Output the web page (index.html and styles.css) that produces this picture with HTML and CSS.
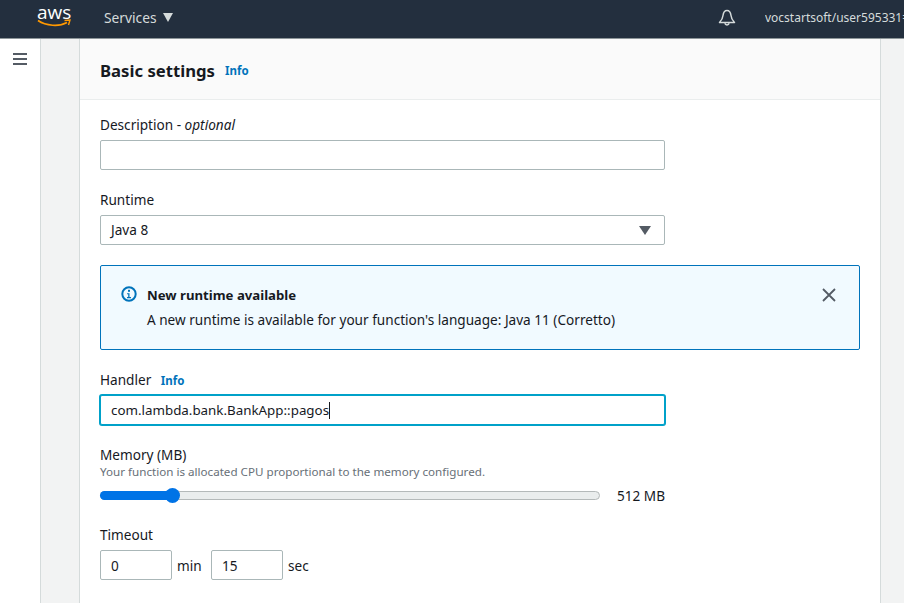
FILE: index.html
```html
<!DOCTYPE html>
<html lang="en">
<head>
    <meta charset="UTF-8">
    <meta name="viewport" content="width=device-width, initial-scale=1.0">
    <title>Basic settings</title>
    <link rel="stylesheet" href="styles.css">
</head>
<body>
    <header class="topbar">
        <div class="logo">
            <span class="logo-text">aws</span>
            <svg class="logo-smile" width="34" height="9" viewBox="0 0 34 9">
                <path d="M1 1.500C9 7 22 8 30 3.500" fill="none" stroke="#ff9900" stroke-width="1.600"/>
                <path d="M27.500 1.500L33 1L31.500 6" fill="none" stroke="#ff9900" stroke-width="1.400"/>
            </svg>
        </div>
        <div class="services">
            <span>Services</span>
            <svg width="10" height="9" viewBox="0 0 10 9"><path d="M0 0H10L5 9Z" fill="#d5dbdb"/></svg>
        </div>
        <svg class="bell" width="18" height="18" viewBox="0 0 18 18">
            <path d="M9 1.500C6.500 1.500 5.300 4 5 6.500C4.700 9.500 3.500 11.500 1.500 13.500H16.500C14.500 11.500 13.300 9.500 13 6.500C12.700 4 11.500 1.500 9 1.500Z" fill="none" stroke="#d5dbdb" stroke-width="1.500" stroke-linejoin="round"/>
            <path d="M6.800 14.300A2.300 2.300 0 0 0 11.200 14.300" fill="none" stroke="#d5dbdb" stroke-width="1.500"/>
        </svg>
        <div class="account">vocstartsoft/user595331=</div>
    </header>

    <div class="layout">
        <nav class="sidenav">
            <svg class="menu-icon" width="14" height="12" viewBox="0 0 14 12">
                <path d="M0 1H14M0 6H14M0 11H14" stroke="#545b64" stroke-width="2"/>
            </svg>
        </nav>

        <main class="content">
            <section class="card">
                <div class="card-header">
                    <h2>Basic settings</h2>
                    <a href="#" class="info">Info</a>
                </div>
                <div class="card-body">
                    <div class="group group-description">
                        <label class="label">Description - <i>optional</i></label>
                        <input class="field" type="text">
                    </div>

                    <div class="group">
                        <label class="label">Runtime</label>
                        <div class="field select">
                            <span>Java 8</span>
                            <svg width="12" height="9" viewBox="0 0 12 9"><path d="M0 0H12L6 9Z" fill="#545b64"/></svg>
                        </div>
                    </div>

                    <div class="alert">
                        <svg class="alert-icon" width="16" height="16" viewBox="0 0 16 16">
                            <circle cx="8" cy="8" r="6.700" fill="none" stroke="#0073bb" stroke-width="2"/>
                            <rect x="7" y="3.800" width="2" height="2" fill="#0073bb"/>
                            <path d="M6 7.200H8.500V11H10V12.200H6V11H7.200V8.300H6Z" fill="#0073bb"/>
                        </svg>
                        <div class="alert-text">
                            <div class="alert-title">New runtime available</div>
                            <div class="alert-message">A new runtime is available for your function's language: Java 11 (Corretto)</div>
                        </div>
                        <svg class="alert-close" width="14" height="14" viewBox="0 0 14 14">
                            <path d="M1 1L13 13M13 1L1 13" stroke="#545b64" stroke-width="1.800"/>
                        </svg>
                    </div>

                    <div class="group">
                        <label class="label">Handler <a href="#" class="info info-small">Info</a></label>
                        <div class="field field-focus">com.lambda.bank.BankApp::pagos<span class="caret"></span></div>
                    </div>

                    <div class="group">
                        <label class="label label-tight">Memory (MB)</label>
                        <div class="hint">Your function is allocated CPU proportional to the memory configured.</div>
                        <div class="slider-row">
                            <div class="slider">
                                <div class="slider-fill"></div>
                                <div class="slider-thumb"></div>
                            </div>
                            <span class="slider-value">512 MB</span>
                        </div>
                    </div>

                    <div class="group group-timeout">
                        <label class="label">Timeout</label>
                        <div class="timeout-row">
                            <input class="field field-small" type="text" value="0">
                            <span class="unit">min</span>
                            <input class="field field-small" type="text" value="15">
                            <span class="unit">sec</span>
                        </div>
                    </div>
                </div>
            </section>
        </main>
    </div>
</body>
</html>
```

FILE: styles.css
```css
* {
    box-sizing: border-box;
}

html, body {
    margin: 0;
    height: 603px;
    overflow: hidden;
}

body {
    font-family: "Noto Sans", Arial, sans-serif;
    font-size: 13.6px;
    color: #16191f;
    background-color: #f2f3f3;
}

.topbar {
    display: flex;
    align-items: center;
    height: 39px;
    padding: 0 0 3px 37px;
    background-color: #232f3e;
    border-bottom: 1px solid #8d9699;
    color: #d5dbdb;
}

.logo {
    position: relative;
    width: 34px;
    height: 35px;
}

.logo-text {
    display: block;
    font-family: "Open Sans", sans-serif;
    font-size: 19px;
    line-height: 24px;
    color: #ffffff;
}

.logo-smile {
    position: absolute;
    left: 0;
    top: 19px;
}

.services {
    display: flex;
    align-items: center;
    gap: 6px;
    margin-left: 33px;
    font-size: 13.8px;
}

.bell {
    margin-left: auto;
}

.account {
    width: 139px;
    margin-left: 29px;
    font-size: 12px;
    white-space: nowrap;
    overflow: hidden;
}

.layout {
    display: flex;
    height: 564px;
}

.sidenav {
    width: 41px;
    padding: 14px 0 0 13px;
    background-color: #ffffff;
    border-right: 1px solid #d5dbdb;
}

.menu-icon {
    display: block;
}

.content {
    flex: 1;
    padding: 0 23px 0 38px;
}

.card {
    height: 100%;
    background-color: #ffffff;
    border-left: 1px solid #d5dbdb;
    border-right: 1px solid #d5dbdb;
}

.card-header {
    display: flex;
    align-items: center;
    gap: 10px;
    height: 61px;
    padding: 2px 0 0 20px;
    background-color: #fafafa;
    border-bottom: 1px solid #eaeded;
}

h2 {
    margin: 0;
    font-size: 16.7px;
    font-weight: 700;
}

.info {
    font-size: 11.5px;
    font-weight: 700;
    color: #0073bb;
    text-decoration: none;
}

.card-body {
    padding: 0 20px;
}

.group {
    margin-top: 20px;
}

.group-description {
    margin-top: 15px;
}

.label {
    display: block;
    height: 25px;
    line-height: 19px;
}

.label-tight {
    height: 20px;
}

.info-small {
    margin-left: 6px;
}

.field {
    display: block;
    width: 565px;
    height: 30px;
    padding: 0 10px;
    border: 1px solid #aab7b8;
    border-radius: 2px;
    background-color: #ffffff;
    font-family: inherit;
    font-size: 13.6px;
    line-height: 28px;
    color: #16191f;
    outline: none;
}

.select {
    display: flex;
    align-items: center;
    justify-content: space-between;
    padding-right: 13px;
}

.field-focus {
    display: flex;
    align-items: center;
    border-color: #00a1c9;
    box-shadow: 0 0 0 1px #00a1c9;
    font-size: 13.35px;
}

.caret {
    width: 1px;
    height: 17px;
    background-color: #16191f;
}

.alert {
    display: flex;
    width: 760px;
    height: 85px;
    margin-top: 20px;
    padding: 20px 23px 0 20px;
    background-color: #f1faff;
    border: 1px solid #0073bb;
    border-radius: 2px;
}

.alert-text {
    flex: 1;
    margin-left: 10px;
}

.alert-title {
    font-size: 13.2px;
    font-weight: 700;
    line-height: 18px;
}

.alert-message {
    margin-top: 7px;
    line-height: 18px;
}

.alert-close {
    margin-top: 2px;
}

.hint {
    font-size: 11.63px;
    line-height: 14px;
    color: #687078;
}

.slider-row {
    display: flex;
    align-items: center;
    width: 565px;
    margin-top: 7px;
}

.slider {
    position: relative;
    width: 500px;
    height: 9px;
    background-color: #eaeded;
    border: 1px solid #b4b9b9;
    border-radius: 5px;
}

.slider-fill {
    position: absolute;
    left: -1px;
    top: -1px;
    width: 74px;
    height: 9px;
    background-color: #0073e6;
    border-radius: 5px;
}

.slider-thumb {
    position: absolute;
    left: 64px;
    top: -4px;
    width: 15px;
    height: 15px;
    background-color: #0073e6;
    border-radius: 50%;
}

.slider-value {
    margin-left: auto;
}

.group-timeout {
    margin-top: 20px;
}

.timeout-row {
    display: flex;
    align-items: center;
}

.field-small {
    width: 72px;
}

.unit {
    width: 39px;
    padding-left: 5px;
}
```
